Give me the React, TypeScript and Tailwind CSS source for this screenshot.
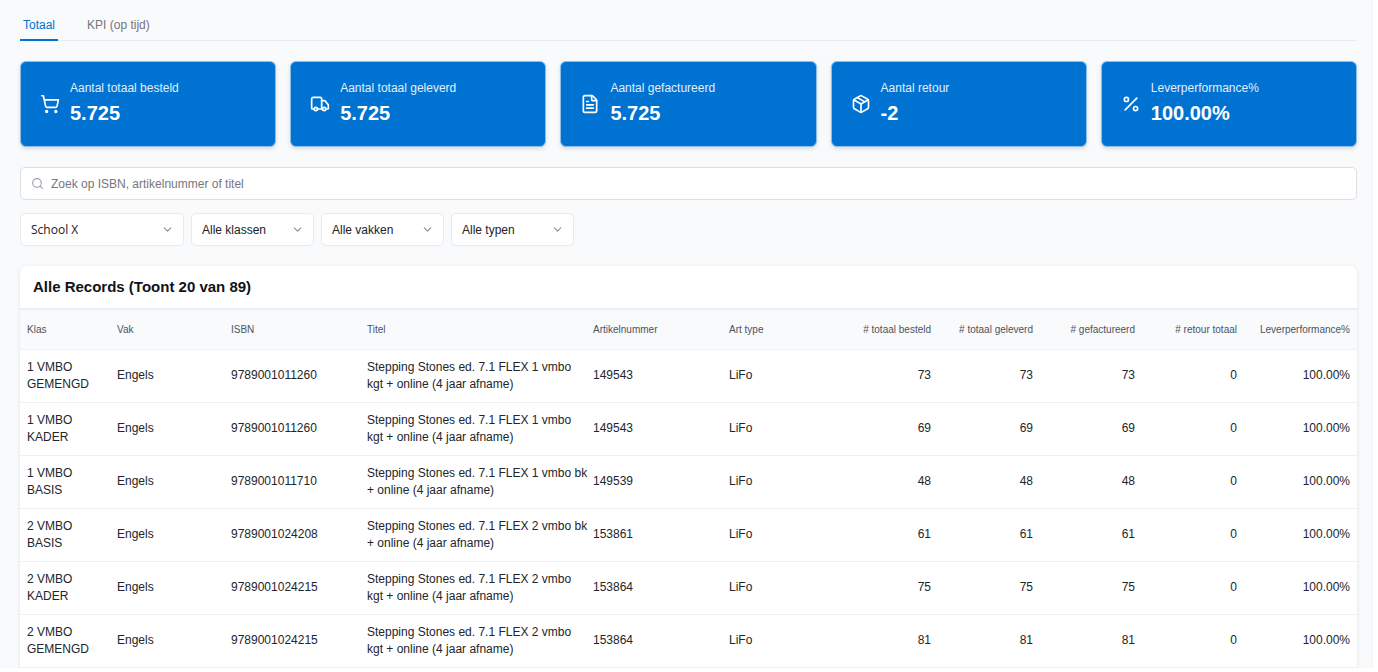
import { useState } from "react";
import {
  ChevronDown,
  FileText,
  Package,
  Percent,
  Search,
  ShoppingCart,
  Truck,
  type LucideIcon,
} from "lucide-react";

const stats: { icon: LucideIcon; label: string; value: string }[] = [
  { icon: ShoppingCart, label: "Aantal totaal besteld", value: "5.725" },
  { icon: Truck, label: "Aantal totaal geleverd", value: "5.725" },
  { icon: FileText, label: "Aantal gefactureerd", value: "5.725" },
  { icon: Package, label: "Aantal retour", value: "-2" },
  { icon: Percent, label: "Leverperformance%", value: "100.00%" },
];

const filters = [
  { name: "School", option: "School X", style: "w-[164px]", font: "font-['Open_Sans',sans-serif]" },
  { name: "Klas", option: "Alle klassen", style: "w-[123px]", font: "" },
  { name: "Vak", option: "Alle vakken", style: "w-[123px]", font: "" },
  { name: "Type", option: "Alle typen", style: "w-[123px]", font: "" },
];

const columns = [
  { title: "Klas", width: "w-[90px]", align: "text-left" },
  { title: "Vak", width: "w-[114px]", align: "text-left" },
  { title: "ISBN", width: "w-[136px]", align: "text-left" },
  { title: "Titel", width: "w-[226px]", align: "text-left" },
  { title: "Artikelnummer", width: "w-[136px]", align: "text-left" },
  { title: "Art type", width: "w-[114px]", align: "text-left" },
  { title: "# totaal besteld", width: "w-[102px]", align: "text-right" },
  { title: "# totaal geleverd", width: "w-[102px]", align: "text-right" },
  { title: "# gefactureerd", width: "w-[102px]", align: "text-right" },
  { title: "# retour totaal", width: "w-[102px]", align: "text-right" },
  { title: "Leverperformance%", width: "w-[113px]", align: "text-right" },
];

const records = [
  { klas: ["1 VMBO", "GEMENGD"], isbn: "9789001011260", titel: ["Stepping Stones ed. 7.1 FLEX 1 vmbo", "kgt + online (4 jaar afname)"], artikel: "149543", aantal: 73 },
  { klas: ["1 VMBO", "KADER"], isbn: "9789001011260", titel: ["Stepping Stones ed. 7.1 FLEX 1 vmbo", "kgt + online (4 jaar afname)"], artikel: "149543", aantal: 69 },
  { klas: ["1 VMBO", "BASIS"], isbn: "9789001011710", titel: ["Stepping Stones ed. 7.1 FLEX 1 vmbo bk", "+ online (4 jaar afname)"], artikel: "149539", aantal: 48 },
  { klas: ["2 VMBO", "BASIS"], isbn: "9789001024208", titel: ["Stepping Stones ed. 7.1 FLEX 2 vmbo bk", "+ online (4 jaar afname)"], artikel: "153861", aantal: 61 },
  { klas: ["2 VMBO", "KADER"], isbn: "9789001024215", titel: ["Stepping Stones ed. 7.1 FLEX 2 vmbo", "kgt + online (4 jaar afname)"], artikel: "153864", aantal: 75 },
  { klas: ["2 VMBO", "GEMENGD"], isbn: "9789001024215", titel: ["Stepping Stones ed. 7.1 FLEX 2 vmbo", "kgt + online (4 jaar afname)"], artikel: "153864", aantal: 81 },
];

function Tabs() {
  const [active, setActive] = useState("Totaal");
  return (
    <div role="tablist" className="flex h-[41px] gap-[26px] border-b border-[#e9ebee]">
      {["Totaal", "KPI (op tijd)"].map((tab) => (
        <button
          key={tab}
          type="button"
          role="tab"
          aria-selected={active === tab}
          onClick={() => setActive(tab)}
          className={
            active === tab
              ? "-mb-px border-b-2 border-[#0072d1] px-[3px] pt-[10px] text-[#0072d1]"
              : "-mb-px border-b-2 border-transparent px-[3px] pt-[10px] text-[#71757c]"
          }
        >
          {tab}
        </button>
      ))}
    </div>
  );
}

function StatCard({ icon: Icon, label, value }: { icon: LucideIcon; label: string; value: string }) {
  return (
    <div className="flex h-[86px] items-center gap-[10px] rounded-[6px] border border-[#8fbfe8] bg-[#0072d1] px-[19px] text-white shadow-[0_2px_4px_rgba(0,0,0,0.12)]">
      <Icon size={20} strokeWidth={2} aria-hidden="true" />
      <div>
        <p className="leading-[18px] text-[#e3effa]">{label}</p>
        <p className="text-[20px] leading-8 font-bold">{value}</p>
      </div>
    </div>
  );
}

function Lines({ lines }: { lines: string[] }) {
  return (
    <>
      {lines.map((line) => (
        <span key={line} className="block">
          {line}
        </span>
      ))}
    </>
  );
}

function RecordsTable() {
  return (
    <section className="mt-5 overflow-hidden rounded-t-[7px] bg-white shadow-[0_1px_4px_rgba(0,0,0,0.1)]">
      <h2 className="px-[13px] pt-[11px] pb-[11px] text-[15px] leading-5 font-bold text-[#111318]">
        Alle Records (Toont 20 van 89)
      </h2>
      <table className="w-full table-fixed border-collapse">
        <thead>
          <tr className="h-10 border-t-2 border-b border-t-[#ebedef] border-b-[#eff0f2] bg-[#f9fafc]">
            {columns.map((c) => (
              <th
                key={c.title}
                scope="col"
                className={`${c.width} ${c.align} px-[7px] text-[10px] font-normal whitespace-nowrap text-[#4b5360]`}
              >
                {c.title}
              </th>
            ))}
          </tr>
        </thead>
        <tbody className="leading-[17px] whitespace-nowrap text-[#22252b]">
          {records.map((r, i) => (
            <tr key={i} className="h-[53px] border-b border-[#eff0f2]">
              <td className="px-[7px]"><Lines lines={r.klas} /></td>
              <td className="px-[7px]">Engels</td>
              <td className="px-[7px]">{r.isbn}</td>
              <td className="pl-[7px]"><Lines lines={r.titel} /></td>
              <td className="px-[7px]">{r.artikel}</td>
              <td className="px-[7px]">LiFo</td>
              <td className="px-[7px] text-right">{r.aantal}</td>
              <td className="px-[7px] text-right">{r.aantal}</td>
              <td className="px-[7px] text-right">{r.aantal}</td>
              <td className="px-[7px] text-right">0</td>
              <td className="px-[7px] text-right">100.00%</td>
            </tr>
          ))}
        </tbody>
      </table>
    </section>
  );
}

export default function App() {
  return (
    <div className="bg-white pr-[5px] font-['Liberation_Sans',Arial,sans-serif] text-[12px]">
      <main className="border-r border-[#f2f3f5] bg-[#f9fafc] pr-[15px] pl-5">
        <Tabs />
        <div className="mt-5 grid grid-cols-5 gap-[14px]">
          {stats.map((s) => (
            <StatCard key={s.label} {...s} />
          ))}
        </div>
        <div className="relative mt-5">
          <Search size={13} className="absolute top-[10px] left-[11px] text-[#989ea8]" aria-hidden="true" />
          <input
            type="search"
            aria-label="Zoek op ISBN, artikelnummer of titel"
            placeholder="Zoek op ISBN, artikelnummer of titel"
            className="block h-[33px] w-full rounded-[5px] border border-[#dcdfe3] bg-white pr-3 pl-[30px] placeholder:text-[#74777d]"
          />
        </div>
        <div className="mt-[13px] flex gap-[7px]">
          {filters.map((f) => (
            <div key={f.name} className={`relative ${f.style}`}>
              <select
                aria-label={f.name}
                className={`block h-[33px] w-full appearance-none rounded-[5px] border border-[#e8eaed] bg-white pr-7 pl-[10px] text-[#1d2025] ${f.font}`}
              >
                <option>{f.option}</option>
              </select>
              <ChevronDown
                size={13}
                className="pointer-events-none absolute top-[10px] right-[10px] text-[#8b8e93]"
                aria-hidden="true"
              />
            </div>
          ))}
        </div>
        <RecordsTable />
      </main>
    </div>
  );
}
